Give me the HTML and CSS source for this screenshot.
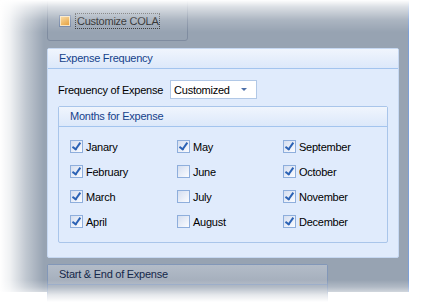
FILE: index.html
```html
<!DOCTYPE html>
<html lang="en">
<head>
    <meta charset="UTF-8">
    <title>Expense Frequency</title>
    <link rel="stylesheet" href="styles.css">
</head>
<body>

    <div class="stage">
        <div class="workspace">

            <div class="cola">
                <span class="box box-cola"></span>
                <span class="focus">Customize COLA</span>
            </div>

            <div class="panel freq">
                <div class="panel-head">Expense Frequency</div>
                <div class="freq-body">
                    <div class="freq-row">
                        <span class="label">Frequency of Expense</span>
                        <div class="select">
                            <span>Customized</span>
                            <span class="arrow"></span>
                        </div>
                    </div>

                    <div class="panel months">
                        <div class="panel-head">Months for Expense</div>
                        <div class="month-grid">
                            <label class="month"><span class="box on"></span>Janary</label>
                            <label class="month"><span class="box on"></span>May</label>
                            <label class="month"><span class="box on"></span>September</label>
                            <label class="month"><span class="box on"></span>February</label>
                            <label class="month"><span class="box"></span>June</label>
                            <label class="month"><span class="box on"></span>October</label>
                            <label class="month"><span class="box on"></span>March</label>
                            <label class="month"><span class="box"></span>July</label>
                            <label class="month"><span class="box on"></span>November</label>
                            <label class="month"><span class="box on"></span>April</label>
                            <label class="month"><span class="box"></span>August</label>
                            <label class="month"><span class="box on"></span>December</label>
                        </div>
                    </div>
                </div>
            </div>

            <div class="panel start">
                <div class="panel-head">Start &amp; End of Expense</div>
            </div>

        </div>
        <div class="fade"></div>
    </div>

</body>
</html>
```

FILE: styles.css
```css
body {
    margin: 0;
    font-family: "Liberation Sans", Arial, sans-serif;
    font-size: 11px;
    letter-spacing: -0.25px;
    color: #000;
    background: #fff;
}

.stage {
    position: relative;
    width: 444px;
    height: 302px;
    overflow: hidden;
    background: #fff;
}

.workspace {
    width: 361px;
    height: 302px;
    padding-left: 47px;
    background: #97a3b2;
    border-right: 1px solid #7d9fd6;
}

/* top group, cut off by the window */
.cola {
    box-sizing: border-box;
    width: 141px;
    height: 51px;
    margin-top: -10px;
    padding: 22px 0 0 11px;
    border: 1px solid #7f8ca0;
    border-radius: 3px;
    display: flex;
    align-items: flex-start;
    gap: 4px;
}

.focus {
    padding: 0 1px;
    line-height: 14px;
    border: 1px dotted #333;
    color: #111;
}

.box {
    box-sizing: border-box;
    flex: none;
    width: 13px;
    height: 13px;
    border: 1px solid #8eaedc;
    background: linear-gradient(135deg, #d4def0, #fbfcff);
    position: relative;
}

.box-cola {
    width: 12px;
    height: 12px;
    margin-top: 2px;
    border-color: #6d81a3;
    background: linear-gradient(135deg, #f7cf84, #e08f1c);
    box-shadow: inset 0 0 0 1px #f8e2b8;
}

.box.on::after {
    content: "";
    position: absolute;
    left: 3px;
    top: 0px;
    width: 3px;
    height: 7px;
    border: solid #2b62b5;
    border-width: 0 2px 2px 0;
    transform: rotate(35deg);
}

.panel {
    box-sizing: border-box;
    border: 1px solid #a9c5ea;
    border-radius: 2px;
    background: #e0ebfc;
}

.panel-head {
    height: 19px;
    line-height: 19px;
    padding-left: 11px;
    color: #15428b;
    background: linear-gradient(#f0f5fd, #dce8fa);
    border-bottom: 1px solid #a3c4ee;
}

.freq {
    width: 352px;
    height: 210px;
    margin-top: 7px;
    border-color: #c6d8f2;
}

.freq-body {
    padding: 11px 9px 0 10px;
}

.freq-row {
    display: flex;
    align-items: center;
    gap: 7px;
    height: 19px;
}

.select {
    box-sizing: border-box;
    width: 87px;
    height: 19px;
    display: flex;
    align-items: center;
    justify-content: space-between;
    padding: 0 9px 0 3px;
    background: #fff;
    border: 1px solid #b1c8e6;
}

.arrow {
    width: 0;
    height: 0;
    border-left: 3px solid transparent;
    border-right: 3px solid transparent;
    border-top: 3px solid #4d6fa8;
}

.months {
    width: 330px;
    height: 137px;
    margin-top: 7px;
}

.month-grid {
    display: grid;
    grid-template-columns: 107px 106px auto;
    grid-auto-rows: 25px;
    padding: 7px 0 0 11px;
}

.month {
    display: flex;
    align-items: center;
    gap: 3px;
}

.start {
    width: 281px;
    height: 60px;
    margin-top: 6px;
    border-color: #8297b8;
    background: #9aa5b4;
}

.start .panel-head {
    background: linear-gradient(#b3bcc8, #a3adbb);
    border-bottom-color: #8a9fc0;
    color: #15284a;
}

/* faded edges of the cut-out screenshot */
.fade {
    position: absolute;
    inset: 0;
    pointer-events: none;
    background:
        linear-gradient(to right, rgba(255,255,255,0) 409px, rgba(255,255,255,0.25) 410px, rgba(255,255,255,0.8) 430px, #fff 442px),
        linear-gradient(to bottom, #fff 0, rgba(255,255,255,0.65) 7px, rgba(255,255,255,0.2) 20px, rgba(255,255,255,0) 32px),
        linear-gradient(to top, #fff 0, rgba(255,255,255,0.75) 7px, rgba(255,255,255,0.25) 15px, rgba(255,255,255,0) 22px),
        linear-gradient(to right, #fff 0, rgba(255,255,255,0.85) 10px, rgba(255,255,255,0.4) 26px, rgba(255,255,255,0) 44px);
}
```
